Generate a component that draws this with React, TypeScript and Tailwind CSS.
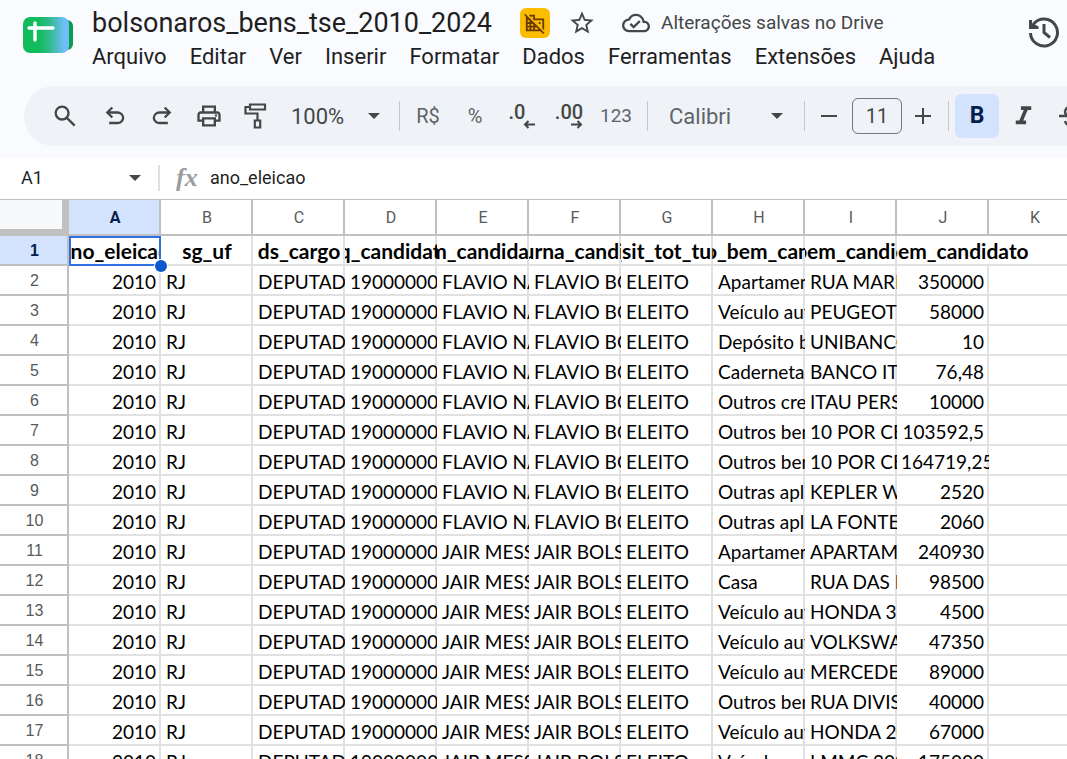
import type {ReactNode} from 'react';
import clsx from 'clsx';
import {
  MdDomainDisabled,
  MdFormatItalic,
  MdOutlineCloudDone,
  MdOutlinePrint,
  MdStarBorder,
} from 'react-icons/md';

const MENUS = [
  'Arquivo',
  'Editar',
  'Ver',
  'Inserir',
  'Formatar',
  'Dados',
  'Ferramentas',
  'Extensões',
  'Ajuda',
];

const COLUMNS = ['A', 'B', 'C', 'D', 'E', 'F', 'G', 'H', 'I', 'J', 'K'];

const FIELDS = [
  'ano_eleicao',
  'sg_uf',
  'ds_cargo',
  'sq_candidato',
  'nm_candidato',
  'nm_urna_candidato',
  'ds_sit_tot_turno',
  'ds_tipo_bem_candidato',
  'ds_bem_candidato',
  'vr_bem_candidato',
  '',
];

const FLAVIO = ['FLAVIO NANTES', 'FLAVIO BOLSONARO'];
const JAIR = ['JAIR MESSIAS', 'JAIR BOLSONARO'];

// [candidate names, asset type, description, value]
const ASSETS: [string[], string, string, string][] = [
  [FLAVIO, 'Apartamento', 'RUA MARIZ', '350000'],
  [FLAVIO, 'Veículo automotor', 'PEUGEOT 307', '58000'],
  [FLAVIO, 'Depósito bancário', 'UNIBANCO', '10'],
  [FLAVIO, 'Caderneta de poupança', 'BANCO ITAU', '76,48'],
  [FLAVIO, 'Outros creditos', 'ITAU PERSONNALITE', '10000'],
  [FLAVIO, 'Outros bens', '10 POR CENTO', '103592,5'],
  [FLAVIO, 'Outros bens', '10 POR CENTO', '164719,25'],
  [FLAVIO, 'Outras aplicações', 'KEPLER WEBER', '2520'],
  [FLAVIO, 'Outras aplicações', 'LA FONTE', '2060'],
  [JAIR, 'Apartamento', 'APARTAMENTO', '240930'],
  [JAIR, 'Casa', 'RUA DAS ROSAS', '98500'],
  [JAIR, 'Veículo automotor', 'HONDA 350', '4500'],
  [JAIR, 'Veículo automotor', 'VOLKSWAGEN', '47350'],
  [JAIR, 'Veículo automotor', 'MERCEDES', '89000'],
  [JAIR, 'Outros bens', 'RUA DIVISORIA', '40000'],
  [JAIR, 'Veículo automotor', 'HONDA 2010', '67000'],
  [JAIR, 'Veículo automotor', 'I MMC 2009', '175000'],
];

const ROWS = ASSETS.map(([names, type, description, value]) => [
  '2010',
  'RJ',
  'DEPUTADO FEDERAL',
  '190000000123',
  ...names,
  'ELEITO',
  type,
  description,
  value,
  '',
]);

function Symbol({d, className}: {d: string; className?: string}) {
  return (
    <svg
      viewBox="0 -960 960 960"
      fill="currentColor"
      className={clsx('size-7', className)}
      aria-hidden="true"
    >
      <path d={d} />
    </svg>
  );
}

const SEARCH =
  'M784-120 532-372q-30 24-69 38t-83 14q-109 0-184.5-75.5T120-580q0-109 75.5-184.5T380-840q109 0 184.5 75.5T640-580q0 44-14 83t-38 69l252 252-56 56ZM380-400q75 0 127.5-52.5T560-580q0-75-52.5-127.5T380-760q-75 0-127.5 52.5T200-580q0 75 52.5 127.5T380-400Z';
const UNDO =
  'M280-200v-80h284q63 0 109.500-40T720-420q0-60-46.500-100T564-560H312l104 104-56 56-200-200 200-200 56 56-104 104h252q97 0 163.500 63T800-420q0 94-66.500 157T564-200H280Z';

function SheetsLogo() {
  return (
    <svg viewBox="0 0 50 38" className="h-[38px] w-[50px]" aria-hidden="true">
      <defs>
        <linearGradient id="sheet" x1="0" x2="1" y1="0" y2="0">
          <stop offset="0.35" stopColor="#10bc5c" />
          <stop offset="0.6" stopColor="#34bb92" />
          <stop offset="0.9" stopColor="#70bdfb" />
        </linearGradient>
      </defs>
      <rect x="30" y="4" width="20" height="30" rx="6" fill="#0b9d4d" />
      <rect x="0" y="1" width="46" height="36" rx="7" fill="url(#sheet)" />
      <path
        d="M6 12h24M12 7v17"
        stroke="#fff"
        strokeWidth="3.4"
        strokeLinecap="round"
      />
    </svg>
  );
}

function HistoryIcon() {
  return (
    <svg
      viewBox="0 0 32 32"
      className="size-8"
      fill="none"
      stroke="currentColor"
      strokeWidth="3"
      aria-hidden="true"
    >
      <path d="M2.500 17A13.500 13.500 0 1 0 5.500 8" />
      <path d="M1 4h3v3l6.500 3.500V13H1z" fill="currentColor" stroke="none" />
      <path d="M16 8v8.500l6 5" />
    </svg>
  );
}

function PaintRollerIcon() {
  return (
    <svg
      viewBox="0 0 28 28"
      className="size-7"
      fill="none"
      stroke="currentColor"
      strokeWidth="2.200"
      aria-hidden="true"
    >
      <path d="M8 2.500h15v5H8zM8 5H3.500v6.500h12V18M12.800 18.500h5.400v7h-5.400z" />
    </svg>
  );
}

function DecimalIcon({digits, more}: {digits: string; more?: boolean}) {
  return (
    <span className="flex flex-col items-end">
      <span
        className={clsx(
          'font-[Roboto] text-xl leading-4 font-medium',
          !more && 'mr-2.5',
        )}
      >
        {digits}
      </span>
      <svg
        viewBox="0 0 12 9"
        className={clsx('h-[9px] w-3', more && 'rotate-180')}
        fill="none"
        stroke="currentColor"
        strokeWidth="2"
        aria-hidden="true"
      >
        <path d="M12 4.500H2M5.500 1 2 4.500 5.500 8" />
      </svg>
    </span>
  );
}

function Caret() {
  return (
    <svg
      viewBox="0 0 12 6"
      className="pointer-events-none absolute right-0 h-1.5 w-3 text-[#444746]"
      fill="currentColor"
      aria-hidden="true"
    >
      <path d="M0 0h12L6 6z" />
    </svg>
  );
}

function ToolButton({
  label,
  className,
  children,
}: {
  label: string;
  className?: string;
  children: ReactNode;
}) {
  return (
    <button
      type="button"
      aria-label={label}
      className={clsx(
        'flex h-11 w-11 shrink-0 items-center justify-center rounded-md',
        className,
      )}
    >
      {children}
    </button>
  );
}

function Divider() {
  return <span className="h-[30px] w-px shrink-0 bg-[#c7c7c7]" />;
}

function Header() {
  return (
    <header className="flex h-[86px] items-start pl-[23px] text-[#1f1f1f]">
      <a href="#" aria-label="Planilhas" className="mt-4 mr-[19px] shrink-0">
        <SheetsLogo />
      </a>
      <div className="min-w-0 flex-1">
        <div className="flex h-[46px] items-center text-[#444746]">
          <h1 className="w-[428px] text-[27px] whitespace-nowrap text-[#1f1f1f]">
            bolsonaros_bens_tse_2010_2024
          </h1>
          <button
            type="button"
            aria-label="Externo"
            className="flex size-[30px] items-center justify-center rounded-md bg-[#fcbd00] text-[#6b3b00]"
          >
            <MdDomainDisabled size={22} />
          </button>
          <button type="button" aria-label="Marcar com estrela" className="ml-[18px]">
            <MdStarBorder size={28} />
          </button>
          <MdOutlineCloudDone size={28} className="ml-[26px]" />
          <span className="ml-[11px] text-[19px] whitespace-nowrap">
            Alterações salvas no Drive
          </span>
        </div>
        <nav className="flex h-5 items-center gap-[23px] text-[22px]">
          {MENUS.map((menu) => (
            <button key={menu} type="button" className="whitespace-nowrap">
              {menu}
            </button>
          ))}
        </nav>
      </div>
      <button
        type="button"
        aria-label="Histórico de versões"
        className="mt-4 mr-[7px] shrink-0 text-[#444746]"
      >
        <HistoryIcon />
      </button>
    </header>
  );
}

function Toolbar() {
  return (
    <div className="ml-6 flex h-[60px] items-center overflow-hidden rounded-l-full bg-[#eff3f8] pl-[19px] text-[22px] text-[#444746]">
      <ToolButton label="Pesquisar nos menus" className="mr-1.5">
        <Symbol d={SEARCH} />
      </ToolButton>
      <div className="flex gap-[3px]">
        <ToolButton label="Desfazer">
          <Symbol d={UNDO} />
        </ToolButton>
        <ToolButton label="Refazer">
          <Symbol d={UNDO} className="-scale-x-100" />
        </ToolButton>
        <ToolButton label="Imprimir">
          <MdOutlinePrint size={28} />
        </ToolButton>
        <ToolButton label="Pintar formatação">
          <PaintRollerIcon />
        </ToolButton>
      </div>
      <div className="relative ml-[13px] flex w-[89px] shrink-0 items-center">
        <select aria-label="Zoom" className="w-full appearance-none">
          <option>100%</option>
        </select>
        <Caret />
      </div>
      <span className="w-[19px] shrink-0" />
      <Divider />
      <div className="flex gap-[3px] pl-1.5 text-xl text-[#5f6368]">
        <ToolButton label="Formatar como moeda">R$</ToolButton>
        <ToolButton label="Formatar como porcentagem">%</ToolButton>
        <ToolButton label="Diminuir casas decimais" className="text-[#444746]">
          <DecimalIcon digits=".0" />
        </ToolButton>
        <ToolButton label="Aumentar casas decimais" className="text-[#444746]">
          <DecimalIcon digits=".00" more />
        </ToolButton>
        <ToolButton label="Mais formatos" className="text-[19px]">
          123
        </ToolButton>
      </div>
      <span className="w-[9px] shrink-0" />
      <Divider />
      <div className="relative mx-[21px] flex w-[114px] shrink-0 items-center text-[#5f6368]">
        <select aria-label="Fonte" className="w-full appearance-none">
          <option>Calibri</option>
        </select>
        <Caret />
      </div>
      <Divider />
      <button
        type="button"
        aria-label="Diminuir tamanho da fonte"
        className="flex w-[47px] shrink-0 justify-center"
      >
        <span className="h-0.5 w-4 bg-[#444746]" />
      </button>
      <input
        aria-label="Tamanho da fonte"
        defaultValue="11"
        className="h-9 w-[50px] shrink-0 rounded-md border border-[#747775] text-center text-xl"
      />
      <button
        type="button"
        aria-label="Aumentar tamanho da fonte"
        className="flex w-[46px] shrink-0 justify-center pr-1"
      >
        <svg viewBox="0 0 16 16" className="size-4" stroke="currentColor" strokeWidth="2">
          <path d="M0 8h16M8 0v16" />
        </svg>
      </button>
      <Divider />
      <ToolButton label="Negrito" className="mr-0.5 ml-1.5 bg-[#d3e3fd] text-[#041e49]">
        <b className="text-[23px]">B</b>
      </ToolButton>
      <ToolButton label="Itálico">
        <MdFormatItalic size={31} />
      </ToolButton>
      <ToolButton label="Tachado" className="ml-1">
        <svg
          viewBox="0 0 28 28"
          className="size-7"
          fill="none"
          stroke="currentColor"
          strokeWidth="2.400"
          aria-hidden="true"
        >
          <path d="M2 14h24M20 9q-1-4.500-6-4.500T8 9.500q0 3 3 4.500M8 19q1 4.500 6 4.500t6-4.500" />
        </svg>
      </ToolButton>
    </div>
  );
}

function FormulaBar() {
  return (
    <div className="mt-3 flex h-[41px] items-center bg-white pb-0.5 text-lg text-[#1f1f1f]">
      <div className="relative ml-[21px] flex w-[120px] items-center">
        <input
          aria-label="Caixa de nome"
          defaultValue="A1"
          className="w-full"
        />
        <Caret />
      </div>
      <span className="ml-[17px] h-[26px] w-0.5 bg-[#dadfe8]" />
      <label
        htmlFor="formula"
        className="ml-4 w-[34px] font-['Liberation_Serif'] text-[26px] leading-7 font-bold text-[#9a9c9e] italic"
      >
        fx
      </label>
      <input id="formula" defaultValue="ano_eleicao" className="flex-1" />
    </div>
  );
}

function Cell({column, children}: {column: number; children: ReactNode}) {
  const numeric = column === 0 || column === 9;

  return (
    <td className="p-0">
      <div
        className={clsx(
          'flex h-[30px] items-center overflow-hidden pt-0.5 whitespace-nowrap shadow-[inset_-2px_-2px_0_#e1e1e1]',
          numeric ? 'pr-[5px] pl-1' : 'pl-[5px]',
        )}
      >
        <span className={clsx(numeric && 'ml-auto')}>{children}</span>
      </div>
    </td>
  );
}

function FieldCell({column, children}: {column: number; children: ReactNode}) {
  return (
    <td className="relative p-0">
      <div
        className={clsx(
          'flex h-[30px] items-center justify-center text-[21px] font-bold whitespace-nowrap',
          column >= 9
            ? 'shadow-[inset_0_-2px_0_#e1e1e1]'
            : 'overflow-hidden shadow-[inset_-2px_-2px_0_#e1e1e1]',
          // the last field spills over the empty cell beside it
          column === 9 && 'relative z-10 [clip-path:inset(0_-100px_0_0)]',
        )}
      >
        {children}
      </div>
      {column === 0 && (
        <>
          <span className="absolute inset-0 border-2 border-[#2f6fe4]" />
          <span className="absolute -right-1.5 -bottom-1.5 z-20 size-3 rounded-full bg-[#0b57d0] ring-1 ring-white" />
        </>
      )}
    </td>
  );
}

function RowNumber({row}: {row: number}) {
  return (
    <th
      scope="row"
      className={clsx(
        "h-[30px] p-0 font-['Liberation_Sans'] text-base shadow-[inset_-2px_-2px_0_#c0c0c0]",
        row === 1
          ? 'bg-[#d3e3fd] font-bold text-[#041e49]'
          : 'font-normal text-[#575a5a]',
      )}
    >
      {row}
    </th>
  );
}

function Grid() {
  return (
    <div className="min-h-0 flex-1 overflow-hidden border-t border-[#c0c0c0] bg-white">
      <table className="w-[1081px] table-fixed border-separate border-spacing-0 font-[Lato] text-[19px] text-black">
        <colgroup>
          <col className="w-[69px]" />
          {COLUMNS.map((column) => (
            <col key={column} className="w-[92px]" />
          ))}
        </colgroup>
        <thead>
          <tr className="font-[Roboto] text-base">
            <td className="h-9 border-r-[7px] border-b-[7px] border-[#c0c0c0] bg-[#f8f9fa] p-0" />
            {COLUMNS.map((column) => (
              <th
                key={column}
                scope="col"
                className={clsx(
                  'h-9 p-0 shadow-[inset_-2px_-2px_0_#c0c0c0]',
                  column === 'A'
                    ? 'bg-[#d3e3fd] font-bold text-[#041e49]'
                    : 'font-normal text-[#575a5a]',
                )}
              >
                {column}
              </th>
            ))}
          </tr>
        </thead>
        <tbody>
          <tr>
            <RowNumber row={1} />
            {FIELDS.map((field, column) => (
              <FieldCell key={column} column={column}>
                {field}
              </FieldCell>
            ))}
          </tr>
          {ROWS.map((cells, index) => (
            <tr key={index}>
              <RowNumber row={index + 2} />
              {cells.map((cell, column) => (
                <Cell key={column} column={column}>
                  {cell}
                </Cell>
              ))}
            </tr>
          ))}
        </tbody>
      </table>
    </div>
  );
}

export default function App() {
  return (
    <div className="flex h-screen flex-col overflow-hidden bg-[#f9fbff] font-[Roboto,sans-serif]">
      <Header />
      <Toolbar />
      <FormulaBar />
      <Grid />
    </div>
  );
}
